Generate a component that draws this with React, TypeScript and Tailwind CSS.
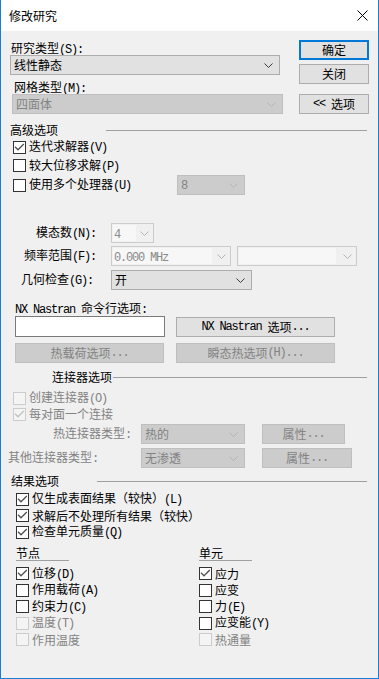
import React from "react";

const ASCII = /^[\x20-\x7E]+$/;

function T({ s }: { s: string }) {
  const parts = s.split(/([\x20-\x7E]+)/).filter((p) => p.length > 0);
  return (
    <>
      {parts.map((p, i) =>
        ASCII.test(p) ? (
          <span key={i} className="font-['Liberation_Mono',monospace] text-[12px] tracking-[-1.2px] whitespace-pre">
            {p}
          </span>
        ) : (
          <span key={i}>{p}</span>
        )
      )}
    </>
  );
}

function Chevron({ disabled }: { disabled?: boolean }) {
  return (
    <svg width="9" height="5" viewBox="0 0 9 5" className="shrink-0">
      <polyline points="0.5,0.5 4.5,4.5 8.5,0.5" fill="none" stroke={disabled ? "#b4b4b4" : "#3c3c3c"} strokeWidth="1" />
    </svg>
  );
}

function Select({ text, disabled, className = "" }: { text: string; disabled?: boolean; className?: string }) {
  return (
    <div
      className={`h-[20px] shrink-0 flex items-center justify-between pl-[3px] pr-[6px] border ${
        disabled ? "bg-[#cccccc] border-[#bfbfbf] text-[#838383]" : "bg-[#e1e1e1] border-[#adadad] text-black"
      } ${className}`}
    >
      <span className="leading-[16px]">
        <T s={text} />
      </span>
      <Chevron disabled={disabled} />
    </div>
  );
}

function Combo({ text, className = "", inner = "" }: { text: string; className?: string; inner?: string }) {
  return (
    <div className={`h-[20px] shrink-0 flex items-center justify-between border border-[#cccccc] bg-[#f0f0f0] pr-[4px] ${className}`}>
      <div className={`h-[16px] ml-[1px] bg-[#f7f7f7] text-[#8a8a8a] leading-[16px] pl-[1px] ${inner}`}>
        <T s={text} />
      </div>
      <Chevron disabled />
    </div>
  );
}

function Btn({
  children,
  className = "",
  disabled,
  primary,
}: {
  children: React.ReactNode;
  className?: string;
  disabled?: boolean;
  primary?: boolean;
}) {
  const cls = primary
    ? "border-2 border-[#0078d7] bg-[#e1e1e1] text-black"
    : disabled
    ? "border border-[#bfbfbf] bg-[#cccccc] text-[#838383]"
    : "border border-[#adadad] bg-[#e1e1e1] text-black";
  return <div className={`flex items-center justify-center shrink-0 leading-[16px] ${cls} ${className}`}>{children}</div>;
}

function Check({
  label,
  checked,
  disabled,
  className = "",
}: {
  label: string;
  checked?: boolean;
  disabled?: boolean;
  className?: string;
}) {
  return (
    <div className={`flex items-center ${className}`}>
      <div
        className={`w-[13px] h-[13px] shrink-0 border flex items-center justify-center ${
          disabled ? "border-[#cccccc] bg-[#f4f4f4]" : "border-[#333333] bg-white"
        }`}
      >
        {checked && (
          <svg width="11" height="11" viewBox="0 0 11 11">
            <polyline
              points="1,4.8 4,7.8 9.8,2"
              fill="none"
              stroke={disabled ? "#c2c2c2" : "#505050"}
              strokeWidth="1.3"
            />
          </svg>
        )}
      </div>
      <span className={`ml-[3px] leading-[16px] whitespace-nowrap ${disabled ? "text-[#838383]" : "text-black"}`}>
        <T s={label} />
      </span>
    </div>
  );
}

export default function App() {
  return (
    <div className="w-[379px] h-[679px] flex flex-col bg-[#f0f0f0] border-x border-b border-[#1a7fd4] overflow-hidden font-['Noto_Sans_CJK_SC','Noto_Sans',sans-serif] text-[12px] leading-[16px] text-black">
      {/* title bar */}
      <div className="h-[31px] shrink-0 bg-white flex items-center justify-between pl-[8px] pr-[10px]">
        <span>修改研究</span>
        <svg width="11" height="11" viewBox="0 0 11 11">
          <path d="M0.5 0.5L10.5 10.5M10.5 0.5L0.5 10.5" stroke="#000" strokeWidth="1" />
        </svg>
      </div>

      <div className="flex flex-col">
        {/* top */}
        <div className="flex mt-[9px]">
          <div className="ml-[9px] w-[273px] flex flex-col">
            <div className="h-[15px] leading-[15px] pl-[1px]">
              <T s="研究类型(S):" />
            </div>
            <Select className="w-[270px]" text="线性静态" />
            <div className="mt-[4px] h-[15px] leading-[15px] pl-[4px]">
              <T s="网格类型(M):" />
            </div>
            <Select className="w-[271px] ml-[2px]" text="四面体" disabled />
          </div>
          <div className="ml-[16px] w-[70px] flex flex-col">
            <Btn primary className="h-[20px]">
              确定
            </Btn>
            <Btn className="h-[20px] mt-[4px]">关闭</Btn>
            <Btn className="h-[20px] mt-[10px]">
              <T s="<< 选项" />
            </Btn>
          </div>
        </div>

        {/* 高级选项 */}
        <div className="flex items-center h-[16px] mt-[8px]">
          <span className="ml-[9px] w-[48px]">高级选项</span>
          <div className="ml-[48px] w-[261px] h-px bg-[#a0a0a0]" />
        </div>
        <Check className="ml-[12px] h-[18px]" checked label="迭代求解器(V)" />
        <Check className="ml-[12px] h-[19px]" label="较大位移求解(P)" />
        <div className="flex items-center h-[20px] ml-[12px]">
          <Check className="w-[164px]" label="使用多个处理器(U)" />
          <Select className="w-[68px]" text="8" disabled />
        </div>

        {/* modes */}
        <div className="mt-[28px] flex items-center h-[20px]">
          <div className="w-[95px] text-right">
            <T s="模态数(N):" />
          </div>
          <Combo className="ml-[15px] w-[43px]" inner="w-[23px]" text="4" />
        </div>
        <div className="mt-[3px] flex items-center h-[20px]">
          <div className="w-[95px] text-right">
            <T s="频率范围(F):" />
          </div>
          <Combo className="ml-[15px] w-[120px]" inner="w-[99px]" text="0.000 MHz" />
          <Combo className="ml-[6px] w-[120px]" inner="w-[97px]" text="" />
        </div>
        <div className="mt-[4px] flex items-center h-[20px]">
          <div className="w-[95px] text-right pr-[3px]">
            <T s="几何检查(G):" />
          </div>
          <Select className="ml-[15px] w-[141px]" text="开" />
        </div>

        {/* NX */}
        <div className="mt-[10px] h-[16px] ml-[14px]">
          <T s="NX Nastran 命令行选项:" />
        </div>
        <div className="flex items-center ml-[14px] h-[21px]">
          <div className="w-[150px] h-[21px] bg-white border border-[#7a7a7a]" />
          <Btn className="ml-[11px] w-[159px] h-[20px]">
            <T s="NX Nastran 选项..." />
          </Btn>
        </div>
        <div className="flex ml-[14px] mt-[6px]">
          <Btn disabled className="w-[149px] h-[20px]">
            <T s="热载荷选项..." />
          </Btn>
          <Btn disabled className="ml-[12px] w-[159px] h-[20px]">
            <T s="瞬态热选项(H)..." />
          </Btn>
        </div>

        {/* 连接器选项 */}
        <div className="flex items-center h-[16px] mt-[6px]">
          <span className="ml-[51px]">连接器选项</span>
          <div className="ml-[1px] w-[254px] h-px bg-[#a0a0a0]" />
        </div>
        <Check className="ml-[12px] h-[16px] mt-[5px]" disabled label="创建连接器(O)" />
        <Check className="ml-[12px] h-[16px]" disabled checked label="每对面一个连接" />
        <div className="flex items-center h-[20px] mt-[2px]">
          <span className="ml-[52px] w-[88px] text-[#838383]">
            <T s="热连接器类型:" />
          </span>
          <Select disabled className="w-[104px]" text="热的" />
          <Btn disabled className="ml-[17px] w-[83px] h-[20px]">
            <T s="属性..." />
          </Btn>
        </div>
        <div className="flex items-center h-[20px] mt-[4px]">
          <span className="ml-[7px] w-[133px] text-[#838383]">
            <T s="其他连接器类型:" />
          </span>
          <Select disabled className="w-[104px]" text="无渗透" />
          <Btn disabled className="ml-[17px] w-[90px] h-[20px]">
            <T s="属性..." />
          </Btn>
        </div>

        {/* 结果选项 */}
        <div className="flex items-center h-[16px] mt-[5px]">
          <span className="ml-[10px] w-[48px]">结果选项</span>
          <div className="ml-[38px] w-[270px] h-px bg-[#a0a0a0]" />
        </div>
        <Check className="ml-[15px] h-[16.5px] mt-[2px]" checked label="仅生成表面结果（较快）(L)" />
        <Check className="ml-[15px] h-[16.5px]" checked label="求解后不处理所有结果（较快）" />
        <Check className="ml-[15px] h-[16.5px]" checked label="检查单元质量(Q)" />

        {/* 节点 / 单元 */}
        <div className="flex mt-[5px] ml-[15px]">
          <div className="w-[183px] flex flex-col">
            <div className="w-[53px] h-[15px] leading-[14px] border-b border-[#a0a0a0]">节点</div>
            <Check className="h-[16.5px] mt-[5px]" checked label="位移(D)" />
            <Check className="h-[16.5px]" label="作用载荷(A)" />
            <Check className="h-[16.5px]" label="约束力(C)" />
            <Check className="h-[16.5px]" disabled label="温度(T)" />
            <Check className="h-[16.5px]" disabled label="作用温度" />
          </div>
          <div className="flex flex-col">
            <div className="w-[53px] h-[15px] leading-[14px] border-b border-[#a0a0a0]">单元</div>
            <Check className="h-[16.5px] mt-[5px]" checked label="应力" />
            <Check className="h-[16.5px]" label="应变" />
            <Check className="h-[16.5px]" label="力(E)" />
            <Check className="h-[16.5px]" label="应变能(Y)" />
            <Check className="h-[16.5px]" disabled label="热通量" />
          </div>
        </div>
      </div>
    </div>
  );
}
